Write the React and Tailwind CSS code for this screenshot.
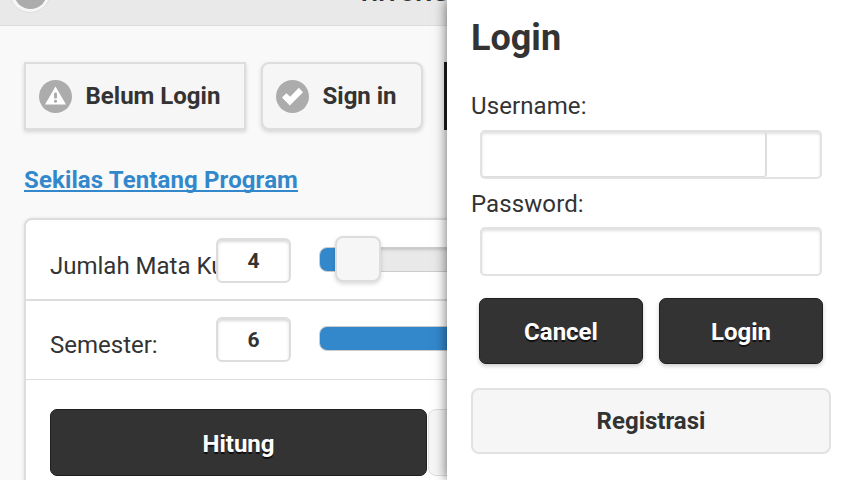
import clsx from 'clsx';

function AlertIcon() {
  return (
    <svg className="h-[33px] w-[33px] shrink-0" viewBox="0 0 33 33">
      <circle cx="16.5" cy="16.5" r="16.5" fill="#acacac" />
      <path d="M16.5 6.5L27 24.5H6z" fill="#fff" />
      <rect x="15" y="12.5" width="3" height="6" rx="1.2" fill="#acacac" />
      <rect x="15" y="19.8" width="3" height="3" rx="1.2" fill="#acacac" />
    </svg>
  );
}

function CheckIcon() {
  return (
    <svg className="h-[33px] w-[33px] shrink-0" viewBox="0 0 33 33">
      <circle cx="16.5" cy="16.5" r="16.5" fill="#acacac" />
      <path d="M6 17.5L10.3 13.3L14.2 16.8L22.8 7.8L27 12.2L13.8 25.5z" fill="#fff" />
    </svg>
  );
}

function IconButton({ icon, className, children }) {
  return (
    <button
      className={clsx(
        'flex h-[68px] shrink-0 items-center border-2 border-[#ddd] bg-[#f6f6f6] pl-[13px] text-left font-bold shadow-[0_2px_4px_rgba(0,0,0,0.15)] text-shadow-[0_1px_0_#f3f3f3]',
        className
      )}
    >
      {icon}
      <span className="ml-[13.5px]">{children}</span>
    </button>
  );
}

function DarkButton({ className, children }) {
  return (
    <button
      className={clsx(
        'rounded-[7px] border border-[#1f1f1f] bg-[#333] pt-[2px] font-bold text-white text-shadow-[0_2px_0_#111]',
        className
      )}
    >
      {children}
    </button>
  );
}

function SliderRow({ label, value, full, className }) {
  return (
    <div className={clsx('flex items-start pl-6', className)}>
      <span className="mt-[12px] w-[168px] shrink-0 overflow-hidden whitespace-nowrap leading-[32px]">
        {label}
      </span>
      <span className="z-10 -ml-[2px] flex h-[45px] w-[75px] shrink-0 items-center justify-center rounded-[6px] border-2 border-[#ddd] bg-white pt-[2px] text-[21px] font-bold shadow-[inset_0_2px_3px_rgba(0,0,0,0.15)]">
        {value}
      </span>
      <div className="mt-[8.5px] ml-[27.5px] flex h-[25px] w-[460px] shrink-0 items-center rounded-[8px] border border-[#ccc] bg-[#e9e9e9] shadow-[inset_0_2px_3px_rgba(0,0,0,0.15)]">
        <div className={clsx('h-full shrink-0 rounded-l-[7px] bg-[#38c]', full ? 'w-full' : 'w-[38px]')} />
        {!full && (
          <div className="-ml-[23px] h-[46px] w-[46px] shrink-0 rounded-[8px] border-2 border-[#ddd] bg-[#f6f6f6] shadow-[0_2px_4px_rgba(0,0,0,0.15)]" />
        )}
      </div>
    </div>
  );
}

function HomePage() {
  return (
    <main className="h-full w-[447px] shrink-0 overflow-hidden bg-[#f9f9f9]">
      <header className="flex h-[26px] items-end border-b border-[#ddd] bg-[#e9e9e9]">
        <div className="mb-[12px] ml-[9px] flex h-[42px] w-[42px] shrink-0 items-center justify-center rounded-full border border-[#ddd] bg-[#f6f6f6]">
          <div className="h-[33px] w-[33px] rounded-full bg-[#acacac]" />
        </div>
        <h1 className="mb-[16px] ml-[310px] font-bold leading-8 whitespace-nowrap">HITUNG</h1>
      </header>

      <div className="w-[854px] px-6 pt-9">
        <div className="flex">
          <IconButton icon={<AlertIcon />} className="w-[222px]">
            Belum Login
          </IconButton>
          <IconButton icon={<CheckIcon />} className="ml-[15px] w-[162px] rounded-[8px]">
            Sign in
          </IconButton>
          <div className="ml-[21px] h-[68px] w-[160px] bg-[#1d1d1d]" />
        </div>

        <a
          href="#tentang"
          className="mt-[34px] block leading-[32px] font-bold tracking-[0.12px] text-[#38c] underline decoration-[1.5px] underline-offset-[2px] [text-decoration-skip-ink:none]"
        >
          Sekilas Tentang Program
        </a>

        <section className="mt-[22px] h-[400px] rounded-[8px] border-2 border-[#ddd] bg-white shadow-[0_1px_4px_rgba(0,0,0,0.12)]">
          <SliderRow
            label="Jumlah Mata Kuliah:"
            value="4"
            className="h-[81px] border-b-2 border-[#ddd] pt-[18px]"
          />
          <SliderRow
            label="Semester:"
            value="6"
            full
            className="h-[79px] border-b border-[#ddd] pt-[16px]"
          />
          <div className="flex gap-px pt-[29px] pl-6">
            <DarkButton className="h-[67px] w-[377px]">Hitung</DarkButton>
            <div className="h-[67px] w-[377px] rounded-[8px] border border-[#ddd] bg-[#f6f6f6]" />
          </div>
        </section>
      </div>
    </main>
  );
}

function LoginPanel() {
  return (
    <aside className="z-20 h-full flex-1 bg-white px-6 shadow-[0_0_12px_rgba(0,0,0,0.6)]">
      <h2 className="pt-[16px] text-[36px] leading-[44px] font-bold">Login</h2>

      <label className="mt-[30px] block leading-[32px] tracking-[0.1px]">Username:</label>
      <div className="mt-[7.5px] ml-[9px] h-[49px] w-[342px] rounded-[5px] border-2 border-[#e2e2e2] shadow-[inset_0_2px_3px_rgba(0,0,0,0.12)]">
        <div className="h-[45px] w-[285px] rounded-[3px] border-r-2 border-b border-[#ddd]" />
      </div>

      <label className="mt-[9.5px] block leading-[32px] tracking-[0.1px]">Password:</label>
      <div className="mt-[7px] ml-[9px] h-[49px] w-[342px] rounded-[5px] border-2 border-[#e2e2e2] shadow-[inset_0_2px_3px_rgba(0,0,0,0.12)]" />

      <div className="mt-[21.5px] ml-[8px] flex gap-4">
        <DarkButton className="h-[66px] w-[164px] shadow-[0_2px_4px_rgba(0,0,0,0.2)]">Cancel</DarkButton>
        <DarkButton className="h-[66px] w-[164px] shadow-[0_2px_4px_rgba(0,0,0,0.2)]">Login</DarkButton>
      </div>

      <button className="mt-[24px] h-[66px] w-[360px] rounded-[8px] border-2 border-[#e2e2e2] bg-[#f6f6f6] pt-px font-bold">
        Registrasi
      </button>
    </aside>
  );
}

export default function App() {
  return (
    <div className="flex h-[480px] w-[854px] overflow-hidden font-['Roboto',sans-serif] text-[24px] text-[#333]">
      <HomePage />
      <LoginPanel />
    </div>
  );
}
